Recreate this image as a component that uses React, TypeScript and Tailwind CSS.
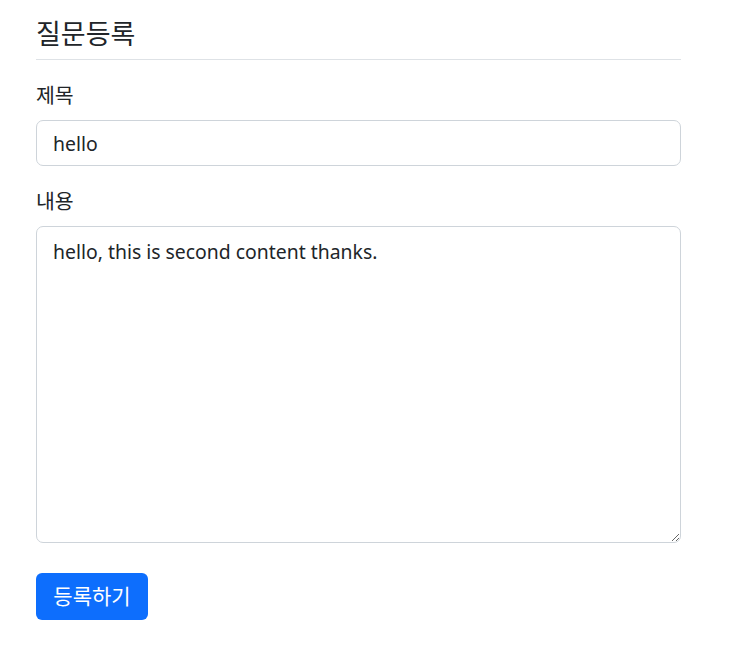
import React from "react";

export default function App() {
  const font = { fontFamily: '"Noto Sans", "Noto Sans CJK KR", sans-serif' };
  return (
    <div className="min-h-[650px] w-[739px] bg-white text-[#212529]" style={font}>
      <div className="ml-[36px] w-[645px]">
        <h4 className="pt-[19px] pb-[11px] border-b border-[#dee2e6] text-[27px] leading-[29px] font-normal">
          질문등록
        </h4>
        <form>
          <div>
            <label className="mt-[21px] mb-[10px] block text-[20.5px] leading-[29px]">제목</label>
            <input
              type="text"
              defaultValue="hello"
              className="block h-[46px] w-full rounded-[7px] border border-[#ced4da] px-[16px] text-[19.4px] leading-[29px] text-[#212529] outline-none"
            />
          </div>
          <div>
            <label className="mt-[21px] mb-[10px] block text-[20.5px] leading-[29px]">내용</label>
            <textarea
              defaultValue="hello, this is second content thanks."
              className="block h-[317px] w-full resize-y rounded-[7px] border border-[#ced4da] px-[16px] py-[10px] text-[19.4px] leading-[29px] text-[#212529] outline-none"
            />
          </div>
          <button
            type="button"
            className="mt-[30px] h-[47px] w-[112px] rounded-[6px] bg-[#0d6efd] text-[21px] leading-[29px] text-white"
          >
            등록하기
          </button>
        </form>
      </div>
    </div>
  );
}
